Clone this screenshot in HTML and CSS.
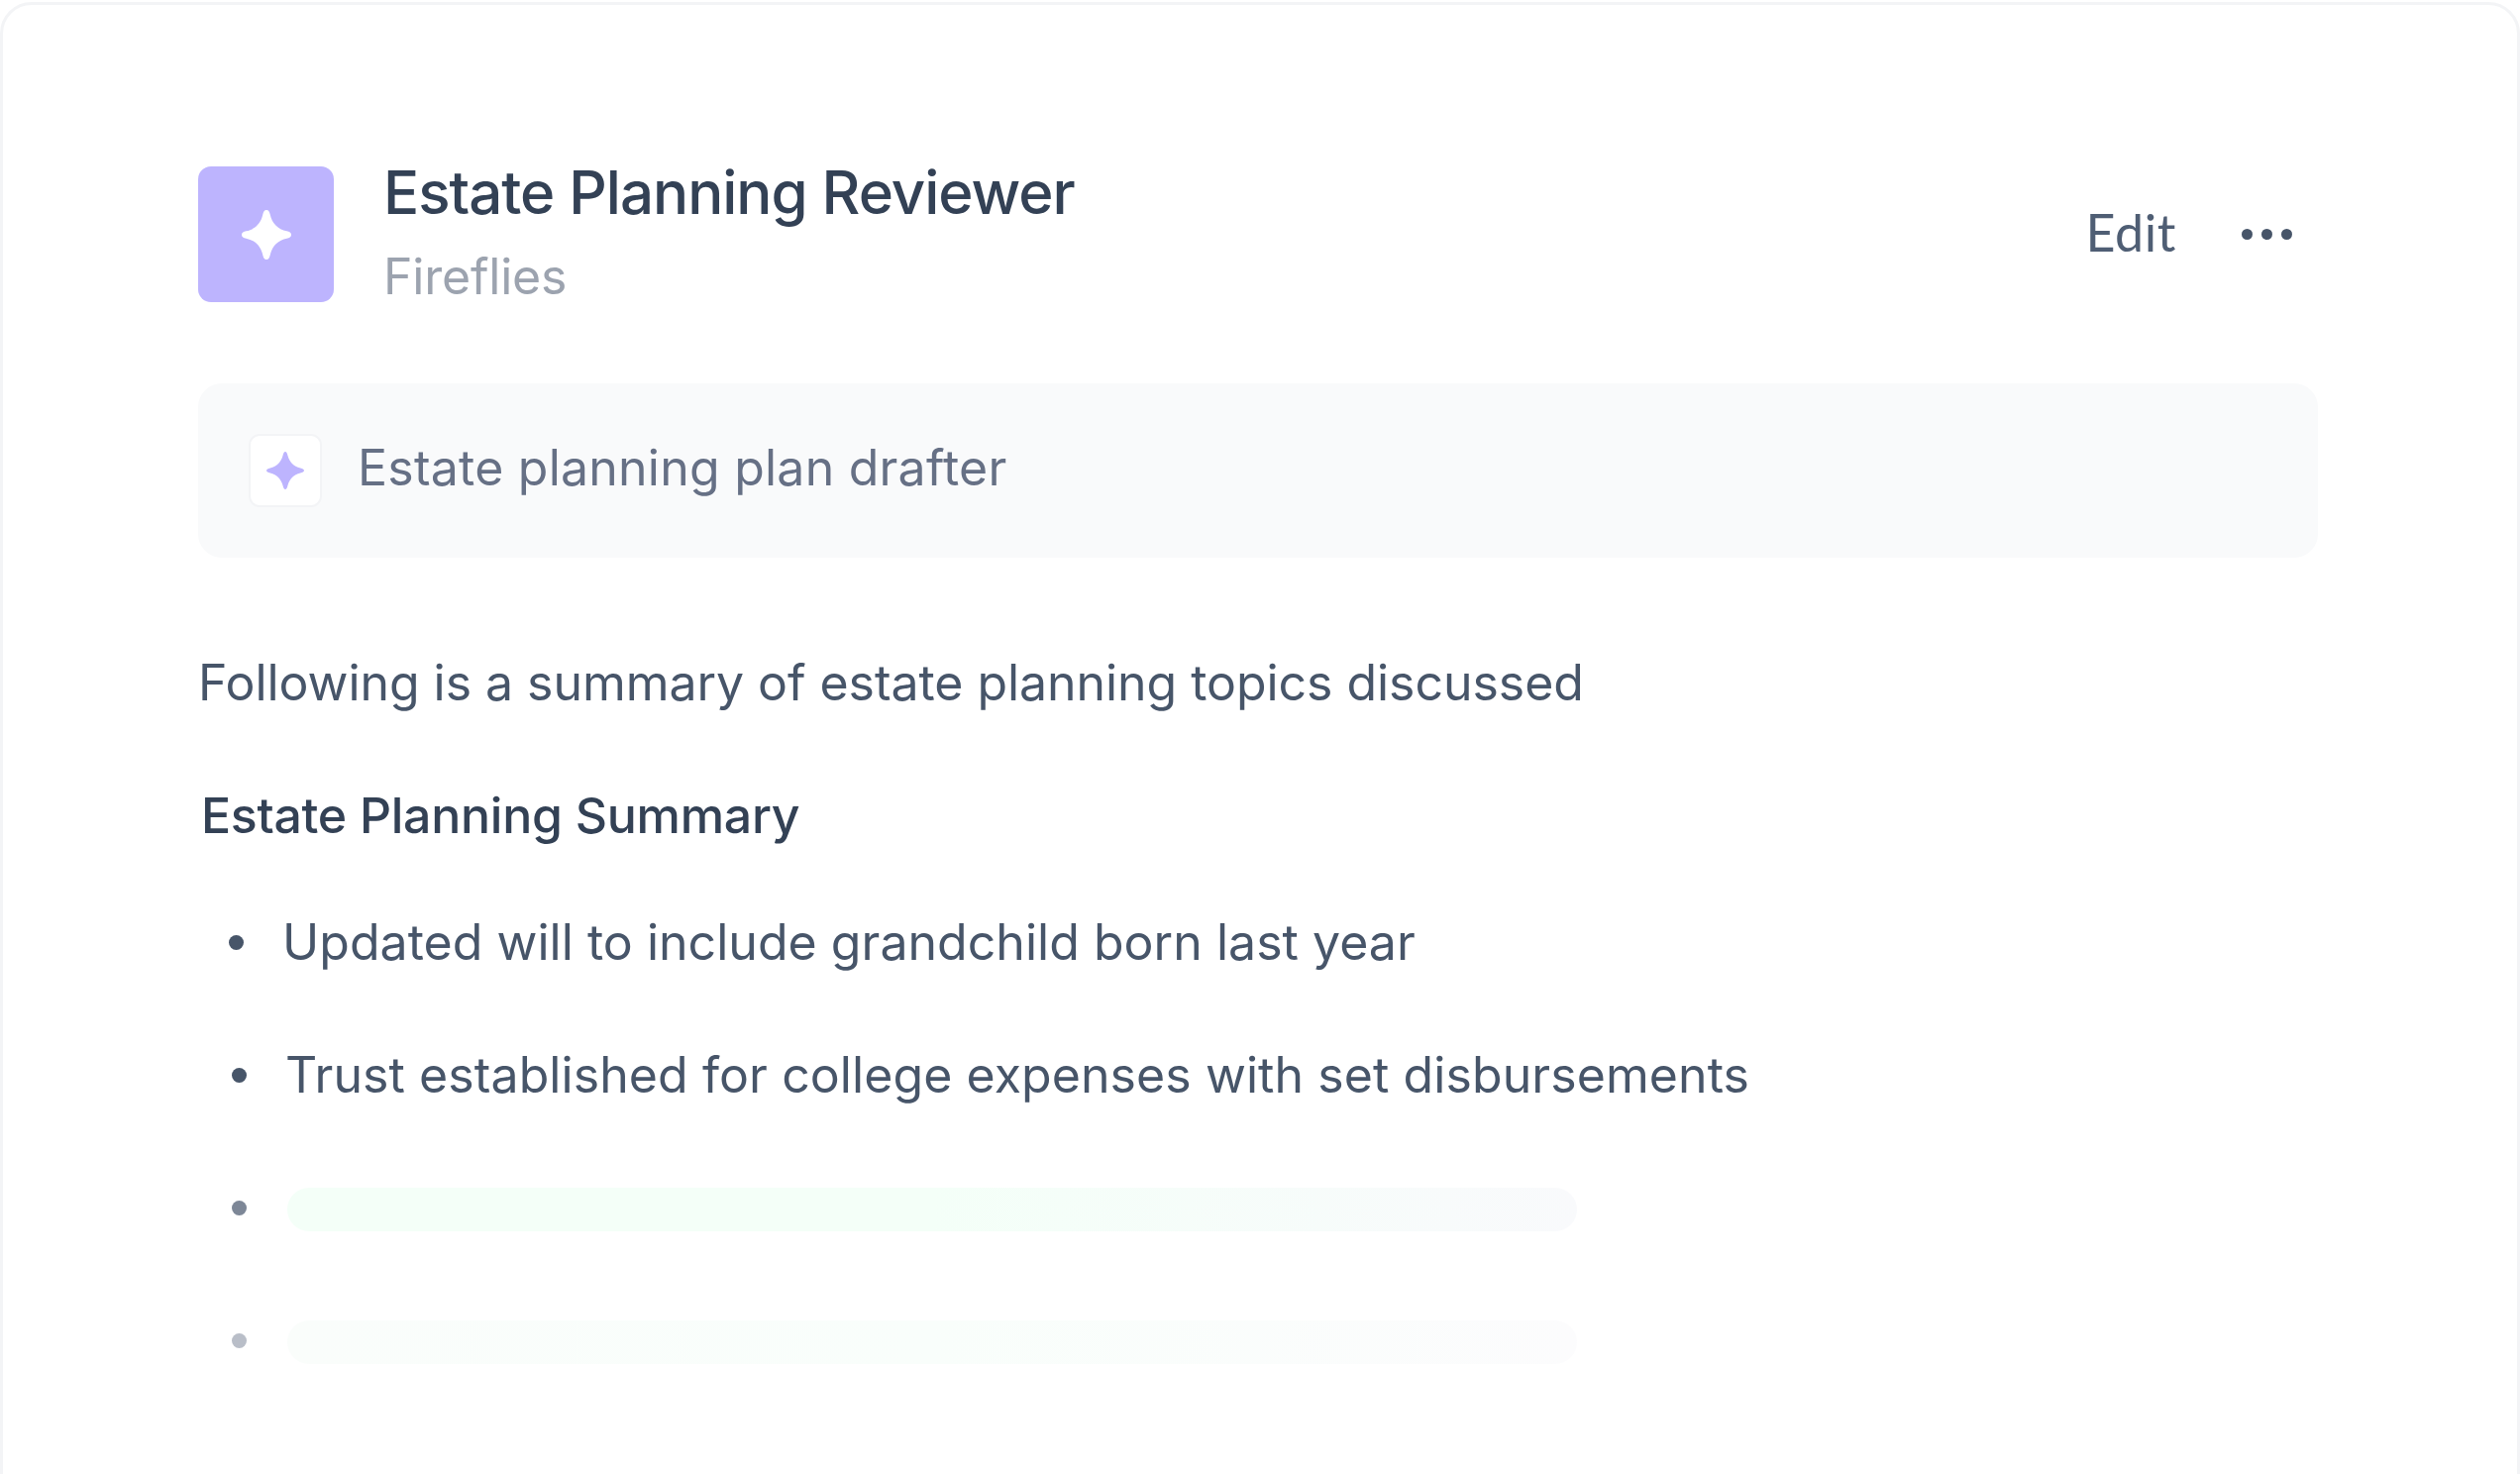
FILE: index.html
```html
<!DOCTYPE html>
<html lang="en">
<head>
<meta charset="utf-8">
<title>Estate Planning Reviewer</title>
<link rel="stylesheet" href="styles.css">
</head>
<body>
<main class="card">
  <header class="header">
    <div class="tile">
      <svg class="tile-star" viewBox="0 0 50 50"><path d="M25 0c2.200 0 3.100 1.800 3.700 4.500C30.600 13.500 36.500 19.400 45.500 21.300C48.200 21.900 50 22.800 50 25s-1.800 3.100-4.500 3.700C36.500 30.600 30.600 36.500 28.700 45.500C28.100 48.200 27.200 50 25 50s-3.100-1.800-3.700-4.500C19.400 36.500 13.500 30.600 4.500 28.700C1.800 28.100 0 27.200 0 25s1.800-3.100 4.500-3.700C13.500 19.400 19.400 13.500 21.300 4.500C21.900 1.800 22.800 0 25 0z"/></svg>
    </div>
    <div class="titles">
      <h1 class="title">Estate Planning Reviewer</h1>
      <p class="subtitle">Fireflies</p>
    </div>
    <div class="actions">
      <span class="edit">Edit</span>
      <span class="dots"><i></i><i></i><i></i></span>
    </div>
  </header>
  <section class="prompt">
    <div class="prompt-icon">
      <svg class="prompt-star" viewBox="0 0 50 50"><path d="M25 0c1.500 0 2.500 2 3.200 5C30.600 14 36 19.400 45 21.800C48 22.500 50 23.500 50 25s-2 2.500-5 3.200C36 30.600 30.600 36 28.200 45C27.500 48 26.500 50 25 50s-2.500-2-3.200-5C19.400 36 14 30.600 5 28.200C2 27.500 0 26.500 0 25s2-2.500 5-3.200C14 19.400 19.400 14 21.800 5C22.500 2 23.500 0 25 0z"/></svg>
    </div>
    <span class="prompt-text">Estate planning plan drafter</span>
  </section>
  <p class="intro">Following is a summary of estate planning topics discussed</p>
  <h2 class="heading">Estate Planning Summary</h2>
  <ul class="items">
    <li class="item item-first"><i class="dot"></i><span>Updated will to include grandchild born last year</span></li>
    <li class="item item-second"><i class="dot"></i><span>Trust established for college expenses with set disbursements</span></li>
    <li class="item skeleton-row"><i class="dot dot-mid"></i><div class="bar bar-strong"></div></li>
    <li class="item skeleton-row"><i class="dot dot-light"></i><div class="bar bar-faint"></div></li>
  </ul>
</main>
</body>
</html>
```

FILE: styles.css
```css
* { box-sizing: border-box; }
html, body { margin: 0; padding: 0; background: #fff; }
body { height: 1488px; overflow: hidden; padding-top: 2px; font-family: Inter, "Liberation Sans", sans-serif; }
i { display: block; }

.card {
  height: 1560px;
  border: 3px solid #f3f4f6;
  border-radius: 32px;
  background: #fff;
  padding: 163px 201px 0 197px;
}

.header { display: flex; align-items: center; height: 137px; }
.tile {
  width: 137px; height: 137px; flex: none;
  border-radius: 13px;
  background: #bdb4fe;
  display: flex; align-items: center; justify-content: center;
}
.tile-star { width: 50px; height: 50px; fill: #fff; }
.titles { margin-left: 50px; flex: 1; }
.title { margin: 0; font-size: 60px; line-height: 64px; font-weight: 500; letter-spacing: -1px; color: #334155; position: relative; top: -3px; }
.subtitle { margin: 20px 0 0; font-size: 50px; line-height: 60px; letter-spacing: -0.2px; color: #9ca3af; }
.actions { display: flex; align-items: center; margin-right: 26px; }
.edit { font-family: Lato, sans-serif; font-weight: 400; font-size: 52px; letter-spacing: 0.6px; color: #4f5e74; position: relative; top: -3px; }
.dots { display: flex; gap: 9px; margin-left: 66px; }
.dots i { width: 11px; height: 11px; border-radius: 50%; background: #475569; }

.prompt {
  margin-top: 82px;
  height: 176px;
  border-radius: 24px;
  background: #f9fafb;
  display: flex; align-items: center;
  padding-left: 51px;
}
.prompt-icon {
  width: 74px; height: 74px; flex: none;
  border: 2px solid #f3f4f6;
  border-radius: 11px;
  background: #fff;
  display: flex; align-items: center; justify-content: center;
}
.prompt-star { width: 38px; height: 38px; fill: #bdb4fe; }
.prompt-text { margin-left: 36px; font-size: 50px; letter-spacing: 0.23px; color: #667085; position: relative; top: -3px; }

.intro { margin: 96px 0 0; font-size: 50px; line-height: 60px; letter-spacing: -0.05px; color: #475569; }
.heading { margin: 74px 0 0 3px; font-size: 50px; line-height: 60px; font-weight: 500; letter-spacing: -0.28px; color: #334155; }

.items { list-style: none; margin: 68px 0 0; padding: 0; }
.item { display: flex; align-items: center; height: 60px; font-size: 50px; line-height: 60px; color: #475569; margin-bottom: 74px; }
.dot { width: 15px; height: 15px; border-radius: 50%; background: #475569; flex: none; }
.item-first { padding-left: 31px; }
.item-first span { margin-left: 39px; letter-spacing: 0.03px; }
.item-second { padding-left: 34px; }
.item-second span { margin-left: 39px; letter-spacing: 0.08px; }
.skeleton-row { padding-left: 34px; position: relative; top: 2px; }
.dot-mid { background: #7d8797; margin-bottom: 3px; }
.dot-light { background: #b9bec8; margin-bottom: 3px; }
.bar { margin-left: 41px; width: 1302px; height: 44px; border-radius: 22px; }
.bar-strong { background: linear-gradient(90deg, #f4fff8 0%, #f4fff8 50%, #f9fafc 100%); }
.bar-faint { background: linear-gradient(90deg, #fafdfb 0%, #f9fefb 50%, #fcfcfd 100%); }
```
